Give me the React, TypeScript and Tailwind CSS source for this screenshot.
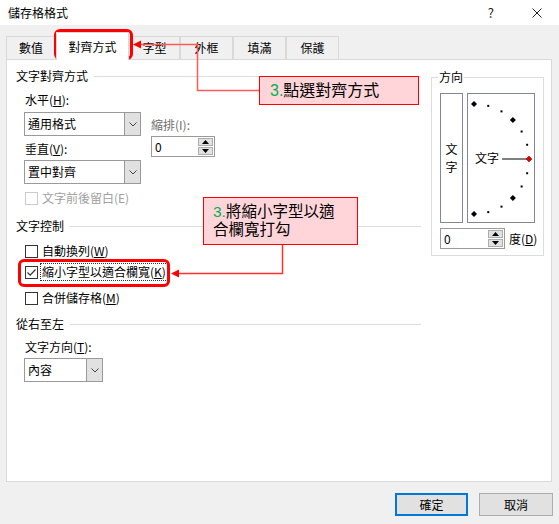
import React from 'react';

const Chevron = () => (
  <svg width="8" height="5" viewBox="0 0 8 5">
    <path d="M0.5 0.5 L4 4 L7.5 0.5" fill="none" stroke="#444" strokeWidth="1" />
  </svg>
);

function Select({ value, width }: { value: string; width: string }) {
  return (
    <div className={`flex h-[24px] border border-[#9a9a9a] bg-white ${width}`}>
      <div className="flex flex-1 items-center pl-[3px] text-[12px] text-black">{value}</div>
      <div className="flex w-[16px] items-center justify-center border-l border-[#9a9a9a] bg-[#e1e1e1]">
        <Chevron />
      </div>
    </div>
  );
}

function Spin({ width }: { width: string }) {
  return (
    <div className={`flex h-[21px] border border-[#9a9a9a] bg-white ${width}`}>
      <div className="flex flex-1 items-center pl-[3px] text-[12px]">0</div>
      <div className="flex w-[16px] flex-col gap-px py-px pr-px">
        <div className="flex flex-1 items-center justify-center border border-[#adadad] bg-[#e1e1e1]">
          <svg width="7" height="4" viewBox="0 0 7 4"><path d="M3.5 0 L7 4 L0 4 Z" fill="#000" /></svg>
        </div>
        <div className="flex flex-1 items-center justify-center border border-[#adadad] bg-[#e1e1e1]">
          <svg width="7" height="4" viewBox="0 0 7 4"><path d="M0 0 L7 0 L3.5 4 Z" fill="#000" /></svg>
        </div>
      </div>
    </div>
  );
}

function Check({ children, checked, disabled, focus }: { children: React.ReactNode; checked?: boolean; disabled?: boolean; focus?: boolean }) {
  return (
    <div className="flex h-[14px] items-center pl-[9px]">
      <div className={`flex h-[13px] w-[13px] items-center justify-center border bg-white ${disabled ? 'border-[#cccccc]' : 'border-[#333333]'}`}>
        {checked && (
          <svg width="11" height="11" viewBox="0 0 11 11">
            <path d="M1.5 5.5 L4.2 8.2 L9.5 2.5" fill="none" stroke="#333" strokeWidth="1.2" />
          </svg>
        )}
      </div>
      <span
        className={`ml-[3px] px-px text-[12px] leading-[16px] ${disabled ? 'text-[#a0a0a0]' : 'text-black'} ${focus ? 'outline outline-1 outline-dotted outline-[#333]' : ''}`}
      >
        {children}
      </span>
    </div>
  );
}

function GroupLabel({ children }: { children: React.ReactNode }) {
  return (
    <div className="flex h-[14px] items-center">
      <span className="text-[12px] leading-[14px]">{children}</span>
      <div className="ml-[6px] h-px flex-1 bg-[#dcdcdc]" />
    </div>
  );
}

function Dial() {
  const pts = [] as { x: number; y: number; big: boolean; zero: boolean }[];
  for (let a = -90; a <= 90; a += 15) {
    const r = (a * Math.PI) / 180;
    pts.push({ x: 7 + 55 * Math.cos(r), y: 66 + 55 * Math.sin(r), big: a % 45 === 0, zero: a === 0 });
  }
  return (
    <div className="relative flex h-[130px] w-[68px] items-center border border-[#828790] bg-white pl-[7px]">
      <svg className="absolute inset-0" width="66" height="128" viewBox="1 1 66 128">
        <line x1="35" y1="66" x2="60" y2="66" stroke="#000" strokeWidth="1" />
        {pts.map((p, i) =>
          p.big ? (
            <path
              key={i}
              d={`M${p.x} ${p.y - 3} L${p.x + 3} ${p.y} L${p.x} ${p.y + 3} L${p.x - 3} ${p.y} Z`}
              fill={p.zero ? '#e00000' : '#000'}
              stroke={p.zero ? '#700' : 'none'}
              strokeWidth="0.5"
            />
          ) : (
            <rect key={i} x={p.x - 1} y={p.y - 1} width="2" height="2" fill="#000" />
          )
        )}
      </svg>
      <span className="relative text-[12px] leading-[14px]">文字</span>
    </div>
  );
}

const Tab = ({ label, w }: { label: string; w: string }) => (
  <div className={`flex h-[23px] items-center justify-center border border-b-0 border-[#d9d9d9] bg-[#f0f0f0] text-[12px] ${w}`}>
    {label}
  </div>
);

export default function App() {
  return (
    <div className="relative flex h-[524px] w-[559px] flex-col overflow-hidden bg-[#f0f0f0] font-['Noto_Sans_CJK_TC','Microsoft_JhengHei',sans-serif] text-black">
      {/* title bar */}
      <div className="flex h-[25px] items-center bg-white pl-[8px] pr-[17px]">
        <span className="text-[12px]">儲存格格式</span>
        <span className="ml-auto mr-[38px] text-[13px] text-[#222]">?</span>
        <svg width="10" height="10" viewBox="0 0 10 10">
          <path d="M0.5 0.5 L9.5 9.5 M9.5 0.5 L0.5 9.5" stroke="#222" strokeWidth="1" />
        </svg>
      </div>

      {/* tabs */}
      <div className="flex items-end pl-[6px] pt-[7px]">
        <Tab label="數值" w="w-[50px]" />
        <div className="relative z-10 -mb-px flex h-[28px] w-[73px] items-center justify-center border border-b-0 border-[#d9d9d9] bg-white text-[12px]">
          對齊方式
        </div>
        <Tab label="字型" w="w-[51px]" />
        <Tab label="外框" w="w-[53px]" />
        <Tab label="填滿" w="w-[53px]" />
        <Tab label="保護" w="w-[53px]" />
      </div>

      {/* panel */}
      <div className="mx-[6px] flex h-[423px] w-[546px] border border-[#d9d9d9] bg-white">
        <div className="flex w-[414px] flex-col pl-[9px] pt-[9px]">
          <GroupLabel>文字對齊方式</GroupLabel>
          <div className="mt-[10px] flex pl-[8px]">
            <div className="flex flex-col">
              <div className="h-[14px] pl-px text-[12px] leading-[14px]">
                水平(<u>H</u>):
              </div>
              <div className="mt-[5px]">
                <Select value="通用格式" width="w-[117px]" />
              </div>
              <div className="mt-[6px] h-[14px] pl-px text-[12px] leading-[14px]">
                垂直(<u>V</u>):
              </div>
              <div className="mt-[4px]">
                <Select value="置中對齊" width="w-[117px]" />
              </div>
            </div>
            <div className="ml-[10px] flex flex-col pt-[25px]">
              <div className="h-[14px] text-[12px] leading-[14px] text-[#6d6d6d]">縮排(I):</div>
              <div className="mt-[4px]">
                <Spin width="w-[64px]" />
              </div>
            </div>
          </div>
          <div className="mt-[7px]">
            <Check disabled>文字前後留白(E)</Check>
          </div>
          <div className="mt-[14px]">
            <GroupLabel>文字控制</GroupLabel>
          </div>
          <div className="mt-[11px]">
            <Check>
              自動換列(<u>W</u>)
            </Check>
          </div>
          <div className="mt-[7px]">
            <Check checked focus>
              縮小字型以適合欄寬(<u>K</u>)
            </Check>
          </div>
          <div className="mt-[12px]">
            <Check>
              合併儲存格(<u>M</u>)
            </Check>
          </div>
          <div className="mt-[12px]">
            <GroupLabel>從右至左</GroupLabel>
          </div>
          <div className="mt-[9px] h-[14px] pl-[9px] text-[12px] leading-[14px]">
            文字方向(<u>T</u>):
          </div>
          <div className="mt-[4px] pl-[8px]">
            <Select value="內容" width="w-[79px]" />
          </div>
        </div>

        {/* orientation */}
        <div className="ml-[10px] mt-[17px] flex h-[179px] w-[113px] flex-col border border-[#dcdcdc] pl-[8px]">
          <div className="-mt-[8px] h-[14px] w-fit bg-white px-px text-[12px] leading-[14px] -ml-[2px]">方向</div>
          <div className="mt-[9px] flex gap-[4px]">
            <div className="flex h-[130px] w-[23px] flex-col items-center justify-center border border-[#828790] text-[12px] leading-[18px]">
              <span>文</span>
              <span>字</span>
            </div>
            <Dial />
          </div>
          <div className="mt-[5px] flex items-center">
            <Spin width="w-[65px]" />
            <span className="ml-[4px] text-[12px]">
              度(<u>D</u>)
            </span>
          </div>
        </div>
      </div>

      {/* buttons */}
      <div className="mt-[11px] flex justify-end gap-[11px] pr-[6px]">
        <button className="h-[23px] w-[73px] border-2 border-[#0078d7] bg-[#e1e1e1] text-[12px]">確定</button>
        <button className="h-[23px] w-[74px] border border-[#adadad] bg-[#e1e1e1] text-[12px]">取消</button>
      </div>

      {/* annotations */}
      <div className="pointer-events-none absolute left-[54px] top-[29px] h-[31px] w-[79px] rounded-[6px] border-[3px] border-[#ff0000]" />
      <div className="pointer-events-none absolute left-[18px] top-[259px] h-[28px] w-[152px] rounded-[6px] border-[3px] border-[#ff0000]" />
      <svg className="pointer-events-none absolute inset-0" width="559" height="524">
        <path d="M259 90.5 H197.5 V44.5 H140" fill="none" stroke="#ff5a5a" strokeWidth="1.5" />
        <path d="M133 44.5 L141 40.5 L141 48.5 Z" fill="#ff0000" />
        <path d="M282.5 245 V273.5 H178" fill="none" stroke="#ff3030" strokeWidth="1.5" />
        <path d="M171 273.5 L179 269.5 L179 277.5 Z" fill="#ff0000" />
      </svg>
      <div className="absolute left-[259px] top-[76px] flex h-[29px] w-[160px] items-center border border-[#ff0000] bg-[#ffd5da] pl-[10px] font-['Liberation_Sans','Noto_Sans_CJK_TC',sans-serif] text-[16px] leading-[18px]">
        <span className="text-[#00b050]">3.</span>點選對齊方式
      </div>
      <div className="absolute left-[203px] top-[197px] flex h-[48px] w-[155px] flex-col border border-[#ff0000] bg-[#ffd5da] pl-[9px] pt-[5px] font-['Liberation_Sans','Noto_Sans_CJK_TC',sans-serif] text-[15.5px] leading-[18px]">
        <div>
          <span className="text-[#00b050]">3.</span>將縮小字型以適
        </div>
        <div>合欄寬打勾</div>
      </div>
    </div>
  );
}
